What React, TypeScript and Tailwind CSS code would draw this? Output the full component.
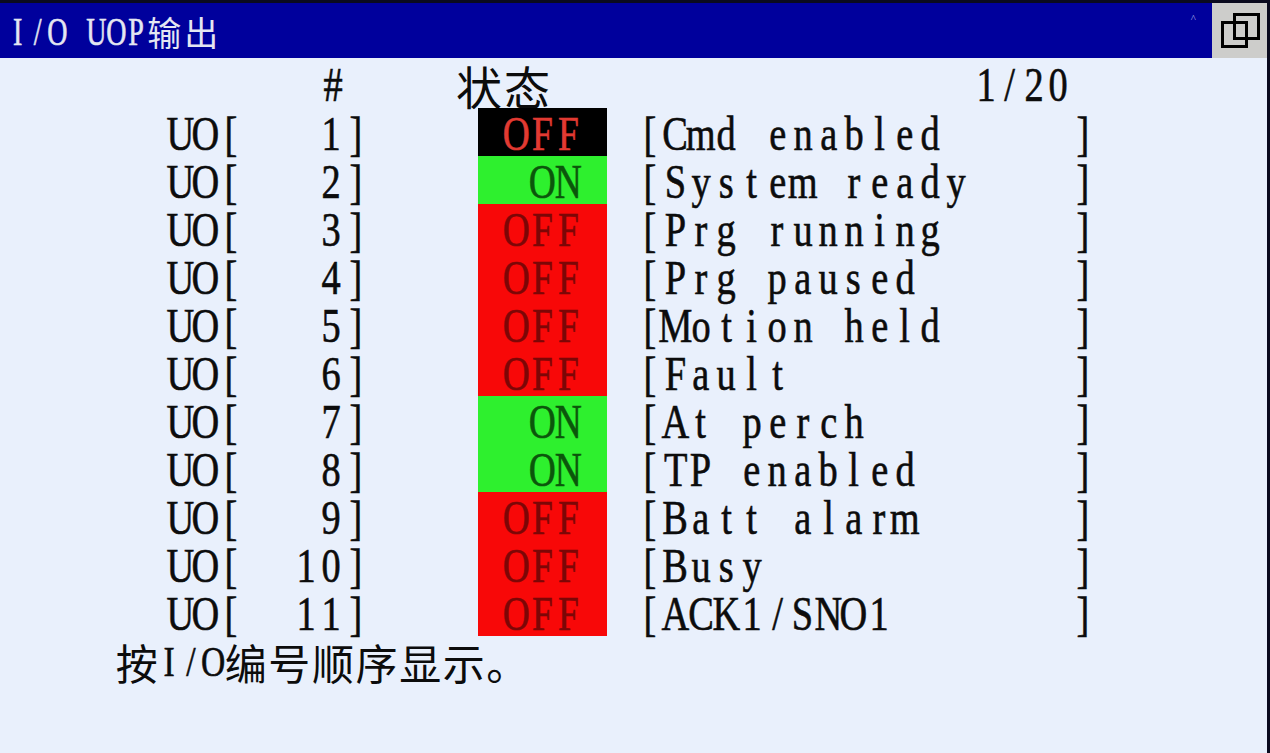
import clsx from "clsx";

type Row = { no: number; label: string; on: boolean };

const ROWS: Row[] = [
  { no: 1, label: "Cmd enabled", on: false },
  { no: 2, label: "System ready", on: true },
  { no: 3, label: "Prg running", on: false },
  { no: 4, label: "Prg paused", on: false },
  { no: 5, label: "Motion held", on: false },
  { no: 6, label: "Fault", on: false },
  { no: 7, label: "At perch", on: true },
  { no: 8, label: "TP enabled", on: true },
  { no: 9, label: "Batt alarm", on: false },
  { no: 10, label: "Busy", on: false },
  { no: 11, label: "ACK1/SNO1", on: false },
];

const SELECTED = 1;

// Pendant font is fixed pitch: one cell per half-width char, two for CJK.
function Cells({
  text,
  half,
  full = "",
  glyph = "scale-x-[0.8]",
}: {
  text: string;
  half: string;
  full?: string;
  glyph?: string;
}) {
  return (
    <span className="inline-flex">
      {Array.from(text).map((ch, i) => {
        const wide = ch.charCodeAt(0) > 0x2e80;
        return (
          <span
            key={i}
            className={clsx("flex shrink-0 justify-center whitespace-pre", wide ? full : half)}
          >
            {wide ? (
              <span className="font-['Noto_Sans_CJK_SC',sans-serif]">{ch}</span>
            ) : (
              <span className={clsx("inline-block [-webkit-text-stroke:0.6px_currentColor]", glyph)}>{ch}</span>
            )}
          </span>
        );
      })}
    </span>
  );
}

function RestoreIcon() {
  return (
    <svg width="40" height="36" viewBox="0 0 40 36" fill="none" stroke="#000" strokeWidth="3">
      <rect x="14.5" y="1.5" width="24" height="24" />
      <rect x="2.5" y="9.5" width="24" height="24" />
    </svg>
  );
}

function StatusBox({ on, selected }: { on: boolean; selected: boolean }) {
  return (
    <div
      className={clsx(
        "flex h-[48px] w-[129px] items-center pt-[3px]",
        selected ? "bg-black text-[#e23a32]" : on ? "bg-[#2ef02e] text-[#0b560b]" : "bg-[#f80808] text-[#7c0606]",
      )}
    >
      <Cells text={on ? "  ON " : " OFF "} half="w-[25.8px]" glyph="scale-x-[0.78]" />
    </div>
  );
}

export default function App() {
  return (
    <div className="flex h-[753px] w-[1270px] overflow-hidden bg-[#0a0a1e] font-['Liberation_Serif','Noto_Sans_CJK_SC',serif]">
      <div className="flex flex-1 flex-col">
        <header className="mt-[3px] flex h-[55px] items-center bg-[#00009c] pl-[8px] text-[#e4e6f2]">
          <div className="flex items-center pt-[2px] text-[40px] leading-[40px]">
            <Cells text="I/O UOP" half="w-[19.7px]" glyph="scale-x-[0.7]" />
            <span className="flex text-[34px]">
              <Cells text="输出" half="w-[19.7px]" full="w-[37px]" />
            </span>
          </div>
          <div className="flex-1" />
          <span className="mr-[16px] -mt-[24px] text-[11px] leading-none text-[#a8b0e8]">^</span>
          <div className="flex h-full w-[55px] items-center justify-center bg-[#cdcdcb]">
            <RestoreIcon />
          </div>
        </header>

        <main className="flex flex-1 flex-col bg-[#e9f0fc] text-[48px] leading-[48px] text-[#0c0c0c]">
          <div className="flex h-[50px] items-center pt-[4px]">
            <Cells text="#" half="ml-[320px] w-[25px]" />
            <span className="ml-[110px] flex text-[46px]">
              <Cells text="状态" half="w-[24px]" full="w-[48px]" />
            </span>
            <Cells text="1/20" half="w-[24px] first:ml-[423px]" />
          </div>

          {ROWS.map((row) => (
            <div key={row.no} className="flex h-[48px] items-center">
              <div className="ml-[168px] pt-[3px]">
                <Cells text={"UO[" + String(row.no).padStart(4) + "]"} half="w-[25px]" />
              </div>
              <div className="ml-[110px]">
                <StatusBox on={row.on} selected={row.no === SELECTED} />
              </div>
              <div className="ml-[30px] pt-[3px]">
                <Cells text={"[" + row.label.padEnd(16) + "]"} half="w-[25.5px]" />
              </div>
            </div>
          ))}

          <div className="flex h-[50px] items-center pl-[115px] pt-[2px] text-[42px] leading-[44px]">
            <Cells text="按I/O编号顺序显示。" half="w-[21.8px]" full="w-[43.6px]" glyph="scale-x-[0.8]" />
          </div>
        </main>
      </div>
      <div className="w-[3px]" />
    </div>
  );
}
